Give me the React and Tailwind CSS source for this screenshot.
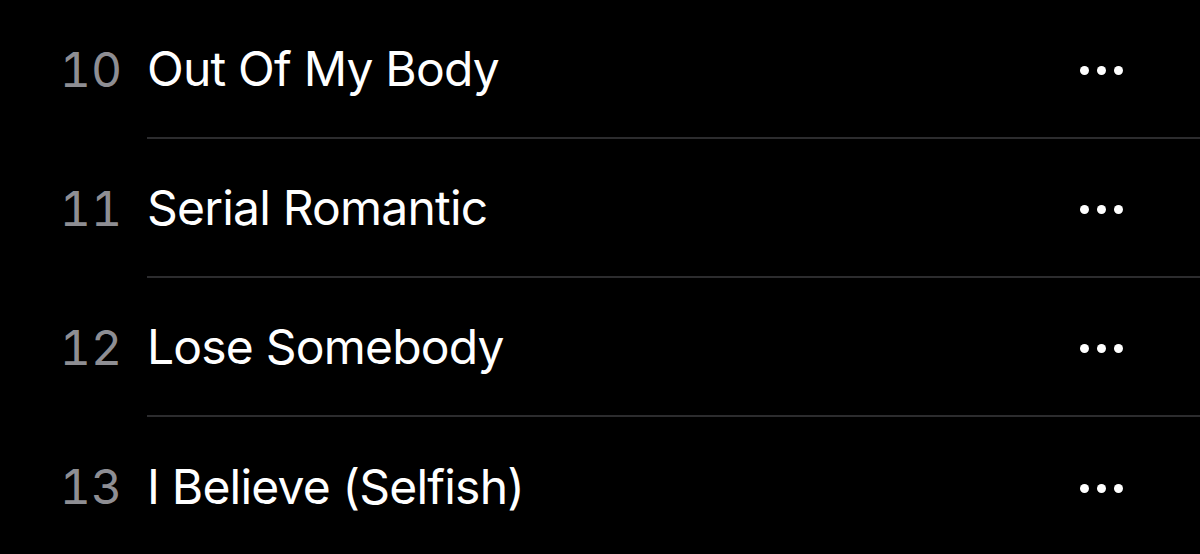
import React from "react";

const tracks = [
  { n: 10, title: "Out Of My Body" },
  { n: 11, title: "Serial Romantic" },
  { n: 12, title: "Lose Somebody" },
  { n: 13, title: "I Believe (Selfish)" },
];

function MoreDots() {
  return (
    <div className="flex items-center gap-[8px] mt-[3px]">
      <span className="w-[9px] h-[9px] rounded-full bg-white" />
      <span className="w-[9px] h-[9px] rounded-full bg-white" />
      <span className="w-[9px] h-[9px] rounded-full bg-white" />
    </div>
  );
}

export default function App() {
  return (
    <div className="w-[1200px] h-[554px] bg-black overflow-hidden font-['Inter','Liberation_Sans',sans-serif]">
      {tracks.map((t, i) => (
        <div key={t.n} className="flex h-[139px]">
          <div className="w-[122px] flex items-center justify-end text-[48px] text-[#8e8e93] tabular-nums tracking-[0px]">
            {t.n}
          </div>
          <div
            className={`flex-1 ml-[25px] pr-[77px] flex items-center justify-between ${
              i < tracks.length - 1 ? "border-b-2 border-[#2c2c2e]" : ""
            }`}
          >
            <span className="text-[48px] text-white tracking-[-0.8px]">{t.title}</span>
            <MoreDots />
          </div>
        </div>
      ))}
    </div>
  );
}
